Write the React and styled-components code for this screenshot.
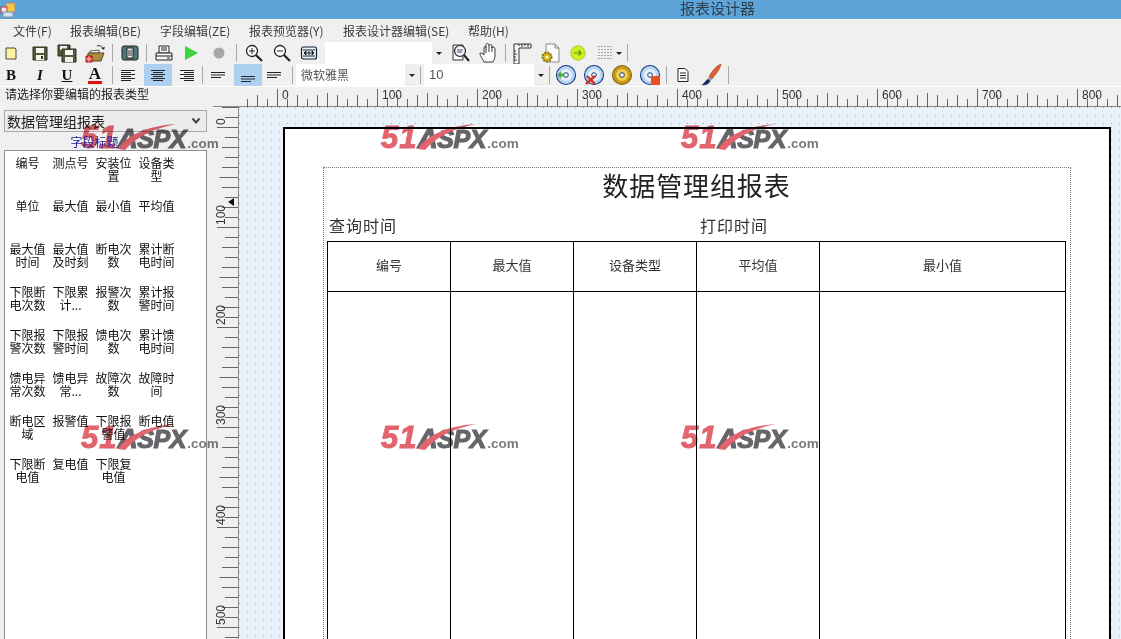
import React from "react";
import styled, { createGlobalStyle } from "styled-components";

const CJK = `"Noto Sans CJK SC", "Liberation Sans", sans-serif`;

const Global = createGlobalStyle`
  html, body { margin: 0; padding: 0; height: 100%; overflow: hidden; background: #f0f0f0; }
  #root { height: 100%; }
`;

const Window = styled.div`
  width: 1121px; height: 639px; display: flex; flex-direction: column; overflow: hidden;
  position: relative; background: #f0f0f0; font-family: ${CJK}; color: #222;
`;
const TitleBar = styled.div`
  height: 19px; flex: none; background: #5fa4d9; display: flex; align-items: center; position: relative;
`;
const AppIcon = styled.div`
  width: 16px; height: 16px; display: flex; flex: none;
`;
const TitleText = styled.div`
  position: absolute; left: 680px; top: 0; font-size: 15px; line-height: 15px; color: #2f3e4c; white-space: nowrap;
`;
const MenuBar = styled.div`
  height: 23px; flex: none; display: flex; align-items: center; padding-left: 13px; font-size: 12px; color: #3a3a3a;
`;
const MenuItem = styled.div`
  width: ${(p) => p.$w}px; flex: none; white-space: nowrap; line-height: 22px;
`;
const Toolbar = styled.div`
  height: 22px; flex: none; display: flex; align-items: center;
`;
const Tool = styled.div`
  width: ${(p) => p.$w || 28}px; height: 22px; flex: none; margin-left: ${(p) => p.$g || 0}px;
  display: flex; align-items: center; justify-content: center;
  background: ${(p) => (p.$on ? "#aed0f0" : "transparent")};
`;
const Sep = styled.div`
  width: 1px; height: 18px; flex: none; background: #a8a8a8; margin-left: ${(p) => p.$g || 0}px;
`;
const Combo = styled.div`
  width: ${(p) => p.$w}px; height: 22px; flex: none; margin-left: ${(p) => p.$g || 0}px; display: flex; background: #fff;
`;
const ComboText = styled.div`
  flex: 1; font-size: ${(p) => p.$size || 12}px; line-height: 22px; padding-left: 5px; color: #555; white-space: nowrap;
  font-family: ${(p) => (p.$latin ? `"Liberation Sans", sans-serif` : CJK)};
`;
const ComboArrow = styled.div`
  width: 14px; flex: none; background: #efefef; display: flex; align-items: center; justify-content: center;
  &::after { content: ""; border: 3px solid transparent; border-top: 3px solid #222; border-bottom: 0; }
`;
const ToolArrow = styled.span`
  margin-left: 3px; border: 3px solid transparent; border-top: 3px solid #222; border-bottom: 0;
`;
const Letter = styled.span`
  font-family: "Liberation Serif", serif; font-weight: 700; font-size: ${(p) => p.$size || 15}px; line-height: ${(p) => (p.$bar ? 14 : 16)}px; color: #111;
  font-style: ${(p) => (p.$i ? "italic" : "normal")};
  text-decoration: ${(p) => (p.$u ? "underline" : "none")};
  border-bottom: ${(p) => (p.$bar ? "3px solid #e01010" : "0")};
  padding: 0 ${(p) => (p.$bar ? 1 : 0)}px;
`;

const Body = styled.div`
  flex: 1; min-height: 0; display: flex; border-top: 1px solid #fff;
`;
const LeftPanel = styled.div`
  width: 213px; flex: none; display: flex; flex-direction: column; padding: 0 6px 0 4px; box-sizing: border-box;
  background: #f0f0f0;
`;
const PanelLabel = styled.div`
  font-size: 12px; line-height: 14px; height: 23px; padding: 0 0 0 1px; color: #222; white-space: nowrap;
`;
const Select = styled.div`
  height: 22px; flex: none; box-sizing: border-box; border: 1px solid #a9a9a9; background: #ececec;
  display: flex; align-items: center; justify-content: space-between; padding: 0 5px 0 2px;
  font-size: 14px; color: #222;
`;
const FieldTitle = styled.div`
  height: 18px; flex: none; text-align: center; padding-right: 22px; font-size: 12px; line-height: 19px; color: #1a1a9a;
  position: relative; z-index: 6;
`;
const FieldList = styled.div`
  flex: 1; min-height: 0; background: #fff; border: 1px solid #8e8e8e; border-bottom: 0; overflow: hidden;
  display: grid; grid-template-columns: repeat(4, 43px); grid-auto-rows: 43px; padding: 6px 0 0 1px;
`;
const Field = styled.div`
  font-size: 12px; line-height: 12.5px; text-align: center; color: #111; padding: 0 3px; word-break: break-all;
`;

const Designer = styled.div`
  flex: 1; min-width: 0; display: grid; grid-template-columns: 26px 1fr; grid-template-rows: 20px 1fr;
  background: #f0f0f0;
`;
const Corner = styled.div`
  border-bottom: 1px solid #8a8a8a;
`;
const HRuler = styled.div`
  overflow: hidden; line-height: 0;
`;
const VRuler = styled.div`
  overflow: hidden; line-height: 0;
`;
const Canvas = styled.div`
  position: relative; overflow: hidden; padding: 20px 0 0 44px; box-sizing: border-box;
  background-color: #e9f2fa;
  background-image: radial-gradient(circle at 0.5px 0.5px, #a2abb4 0.75px, transparent 1px);
  background-size: 8px 8px;
  border-left: 1px solid #8a8a8a; margin-left: -1px;
`;
const Page = styled.div`
  width: 828px; height: 700px; box-sizing: border-box; background: #fff; border: 2px solid #000; padding: 38px 38px 0 38px;
`;
const Frame = styled.div`
  height: 640px; box-sizing: border-box; border: 1px dotted #777; padding: 0 4px 0 3px;
`;
const ReportTitle = styled.div`
  height: 43px; text-align: center; font-size: 26px; line-height: 34px; letter-spacing: 0.9px; color: #222; font-weight: 400;
`;
const ReportMeta = styled.div`
  height: 30px; display: flex; font-size: 16px; line-height: 28px; letter-spacing: 1px; color: #333; padding-left: 2px;
`;
const MetaItem = styled.div`
  width: ${(p) => p.$w}px; flex: none;
`;
const ReportTable = styled.div`
  display: grid; grid-template-columns: 123px 123px 123px 123px 246px; grid-template-rows: 50px 400px;
  border-top: 1px solid #000; border-left: 1px solid #000; width: 739px; box-sizing: border-box;
  font-size: 13px; color: #333;
`;
const HeadCell = styled.div`
  border-right: 1px solid #000; border-bottom: 1px solid #000; display: flex; align-items: center; justify-content: center;
  padding-bottom: 4px; box-sizing: border-box;
`;
const BodyCell = styled.div`
  border-right: 1px solid #000;
`;

const WatermarkLayer = styled.div`
  position: absolute; left: 81px; top: 123px; pointer-events: none; display: grid; mix-blend-mode: multiply;
  grid-template-columns: repeat(3, 300px); grid-template-rows: repeat(2, 300px); z-index: 5;
`;
const Mark = styled.div`
  position: relative; width: 138px; height: 30px; display: flex; align-items: baseline; white-space: nowrap;
  font-family: "Liberation Sans", sans-serif; font-weight: 700; line-height: 30px;
`;
const MarkRed = styled.span`
  font-size: 31px; font-style: italic; color: #e2646e; letter-spacing: 1px; -webkit-text-stroke: 1px #e2646e;
`;
const MarkGray = styled.span`
  font-size: ${(p) => p.$size}px; font-style: italic; color: #66666a; letter-spacing: -0.4px; -webkit-text-stroke: 1.2px #66666a;
`;
const MarkCom = styled.span`
  font-size: 13.5px; color: #7a7a7e; margin-left: 1px;
`;
const Swoosh = styled.svg`
  position: absolute; left: 35px; top: 0; width: 62px; height: 28px;
`;

/* icons */
const S = ({ children, w = 20, h = 20 }) => (
  <svg width={w} height={h} viewBox={`0 0 ${w} ${h}`}>{children}</svg>
);
const IFolder = () => <S><path d="M5 5h9l1 1v10H5z" fill="#fbf3a0" stroke="#4a4a2a" /></S>;
const ISave = () => (
  <S><path d="M3 4h14v13H3z" fill="#56593a" stroke="#2c2e1c" /><path d="M6 5h8v5H6z" fill="#f4f4f0" /><path d="M6 12h8v5H6z" fill="#f2f2e0" /><path d="M11 13h2v3h-2z" fill="#333" /></S>
);
const ISaveAll = () => (
  <S><path d="M1 2h12v11H1z" fill="#56593a" stroke="#2c2e1c" /><path d="M3 3h7v4H3z" fill="#eee" /><path d="M5 6h14v13H5z" fill="#56593a" stroke="#2c2e1c" /><path d="M8 7h8v5H8z" fill="#f4f4f0" /><path d="M8 14h8v5H8z" fill="#eee" /></S>
);
const IOpen = () => (
  <S><path d="M5 8l9-1v3H5z" fill="#fff" stroke="#555" /><path d="M3 18V10h14l2 0-3 8z" fill="#b08c40" stroke="#5a4a20" /><path d="M12 3c3-1 5 0 6 3" fill="none" stroke="#333" /><path d="M16 5l3 2 1-3z" fill="#333" /><path d="M1 13h6v6H1z" fill="#e04040" stroke="#a01010" /><path d="M4 13v6M1 16h6" stroke="#fbb" /></S>
);
const IPage = () => (
  <S><rect x="2" y="3" width="16" height="14" rx="2" fill="#4e7878" stroke="#222" /><rect x="7" y="5" width="6" height="10" fill="#eee" stroke="#222" /><path d="M8 8h4M8 10h4M8 12h4" stroke="#333" /></S>
);
const IPrint = () => (
  <S><path d="M5 3h10v7H5z" fill="#fff" stroke="#222" /><path d="M7 5h6M7 7h6" stroke="#222" /><path d="M2 10h16v7H2z" fill="#f8f8f8" stroke="#222" /><path d="M2 13h16" stroke="#222" /><path d="M13 15h3" stroke="#222" /></S>
);
const IPlay = () => <S><path d="M4 3l13 7-13 7z" fill="#3bd43b" /></S>;
const IStop = () => <S><circle cx="10" cy="10" r="5.5" fill="#a8a8a8" /></S>;
const IZoom = ({ minus }) => (
  <S>
    <circle cx="8" cy="8" r="5.5" fill="#fff" stroke="#222" strokeWidth="1.3" />
    <path d="M12 12l6 6" stroke="#222" strokeWidth="2.2" />
    <path d={minus ? "M5 8h6" : "M5 8h6M8 5v6"} stroke="#222" />
  </S>
);
const IFit = () => (
  <S><rect x="2.5" y="4" width="15" height="12" rx="2" fill="#eef3f8" stroke="#123" strokeWidth="1.2" /><path d="M4 7h12M4 13h12" stroke="#123" /><path d="M8 10h4M5 10l2-2v4zM15 10l-2-2v4z" fill="#123" stroke="#123" /><path d="M10 8v4" stroke="#123" /></S>
);
const ISearch = () => (
  <S w={22} h={22}><path d="M4 3h10v15H4z" fill="#fff" stroke="#333" /><circle cx="11" cy="9" r="5.5" fill="#eef" stroke="#222" strokeWidth="1.2" /><path d="M15 13l5 6" stroke="#222" strokeWidth="2" /><path d="M8 8h6M8 10h5" stroke="#555" /></S>
);
const IHand = () => (
  <S w={22} h={22}><path d="M6 20c-1-3-4-6-4-8s2-1 4 1V6c0-2 2-2 2 0V3c0-2 3-2 3 0v1c0-2 3-2 3 0v2c0-2 3-1 3 1v6c0 3-1 5-2 7z" fill="#fff" stroke="#222" strokeWidth="0.9" /><path d="M8 6v5M11 4v6M14 5v5" stroke="#222" strokeWidth="0.9" /></S>
);
const IRuler = () => (
  <S w={22} h={22}><path d="M3 2h17v4H8v16H3z" fill="#f6f6f6" stroke="#333" /><path d="M8 2v2M11 2v3M14 2v2M17 2v3M3 9h2M3 12h3M3 15h2M3 18h3" stroke="#333" /></S>
);
const IGearDoc = () => (
  <S w={22} h={22}><path d="M7 2h9l4 4v14H7z" fill="#fafafa" stroke="#888" /><path d="M16 2v4h4" fill="none" stroke="#888" /><circle cx="8" cy="15" r="4.5" fill="#d6b416" stroke="#8a7410" strokeDasharray="2 1" strokeWidth="2" /><circle cx="8" cy="15" r="1.5" fill="#fff" /></S>
);
const IGreen = () => (
  <S><circle cx="10" cy="10" r="7.2" fill="#cdf020" stroke="#a8cc20" /><path d="M6 10h7M10.5 7.5L13 10l-2.5 2.5" fill="none" stroke="#5a8a20" strokeWidth="1.2" /></S>
);
const IDots = () => (
  <S w={16} h={16}>
    <path d="M1.5 1.5h13M1.5 4.5h13M1.5 7.5h13M1.5 10.5h13M1.5 13.5h13" stroke="#555" strokeDasharray="1 2" />
  </S>
);
const IAlign = ({ kind }) => (
  <S w={16} h={20}>
    {[5, 7, 9, 11, 13, 15].map((y, i) => {
      const w = i % 2 === 0 ? 14 : 10;
      const x = kind === "c" ? (16 - w) / 2 : kind === "r" ? 15 - w : 1;
      return <path key={y} d={`M${x} ${y + 0.5}h${w}`} stroke="#222" />;
    })}
  </S>
);
const IVAlign = ({ y0 }) => (
  <S w={16} h={20}>
    {[0, 2.5, 5].map((d, i) => (
      <path key={d} d={`M1 ${y0 + d + 0.5}h${i === 2 ? 10 : 14}`} stroke="#222" />
    ))}
  </S>
);
const IDisc = ({ kind }) => {
  const gold = kind === "gold";
  return (
    <S w={22} h={22}>
      <circle cx="11" cy="11" r="9.5" fill={gold ? "#c89a18" : "#bcd6f2"} stroke={gold ? "#8a6410" : "#123a8a"} strokeWidth="1.1" />
      <circle cx="11" cy="11" r="6" fill={gold ? "#ecd050" : "#e6f1fb"} />
      <circle cx="11" cy="11" r="2.3" fill="#fff" stroke="#123a6a" />
      {kind === "add" && <path d="M2 11l4-4v2.5h3v3H6V15z" fill="#48b048" />}
      {kind === "del" && <path d="M3 20l9-8M4 12l8 8" stroke="#d83020" strokeWidth="2.4" />}
      {kind === "stop" && <path d="M12 12h9v9h-9z" fill="#e85020" />}
    </S>
  );
};
const IDoc = () => (
  <S w={16} h={16}><path d="M3 1.5h7l3 3v10H3z" fill="#fff" stroke="#222" /><path d="M5 6h6M5 8.5h6M5 11h6" stroke="#222" /></S>
);
const IBrush = () => (
  <S w={22} h={24}><path d="M21 1c-3 1-9 6-12 13l3 2c3-4 8-9 9-15z" fill="#d8603a" stroke="#a03a20" strokeWidth="0.6" /><path d="M9 14l3 2-1.5 2-3-2z" fill="#999" /><path d="M7.5 16l3 2c-2 4-6 5-9 4 2-1 3-3 6-6z" fill="#1e2c70" /></S>
);
const Chevron = () => (
  <svg width="10" height="8" viewBox="0 0 10 8"><path d="M1.5 1.5L5 5.5l3.5-4" fill="none" stroke="#444" strokeWidth="2" /></svg>
);

const tickInset = (i, major, mid, even, odd) => {
  const m = ((i % 10) + 10) % 10;
  if (m === 0) return major;
  if (m === 5) return mid;
  return m % 2 === 0 ? even : odd;
};
const HorizontalRuler = () => {
  const ticks = [];
  for (let x = 247, i = -3; x < 1121; x += 10, i++) {
    const top = tickInset(i, 2, 6, 8, 12);
    const px = x - 239;
    ticks.push(<path key={x} d={`M${px + 0.5} ${top}V20`} stroke="#666" />);
    if (i % 10 === 0) ticks.push(<text key={`t${x}`} x={px + 5} y={12} fontSize="12" fill="#333" fontFamily="Liberation Sans, sans-serif">{i * 10}</text>);
  }
  return (
    <svg width="882" height="20" viewBox="0 0 882 20"><path d="M0 19.5H882" stroke="#8a8a8a" />{ticks}</svg>
  );
};
const VerticalRuler = () => {
  const ticks = [];
  for (let y = 0, i = -2; y < 532; y += 10, i++) {
    const left = tickInset(i, 4, 6.5, 9, 12);
    ticks.push(<path key={y} d={`M${left} ${y + 0.5}H26`} stroke="#666" />);
    if (i % 10 === 0) ticks.push(<text key={`t${y}`} transform={`translate(12 ${y - 2}) rotate(-90)`} fontSize="12" fill="#333" fontFamily="Liberation Sans, sans-serif">{i * 10}</text>);
  }
  return (
    <svg width="26" height="532" viewBox="0 0 26 532">{ticks}<path d="M21 99l-6-4 6-4z" fill="#111" /></svg>
  );
};

const menus = [["文件(F)", 57], ["报表编辑(BE)", 90], ["字段编辑(ZE)", 89], ["报表预览器(Y)", 94], ["报表设计器编辑(SE)", 125], ["帮助(H)", 60]];
const fields = [
  "编号","测点号","安装位置","设备类型","单位","最大值","最小值","平均值",
  "最大值时间","最大值及时刻","断电次数","累计断电时间","下限断电次数","下限累计...","报警次数","累计报警时间",
  "下限报警次数","下限报警时间","馈电次数","累计馈电时间","馈电异常次数","馈电异常...","故障次数","故障时间",
  "断电区域","报警值","下限报警值","断电值","下限断电值","复电值","下限复电值",
];
const heads = ["编号", "最大值", "设备类型", "平均值", "最小值"];

const Watermark = () => (
  <Mark>
    <MarkRed>51</MarkRed><MarkGray $size={28}>A</MarkGray><MarkGray $size={25}>SPX</MarkGray><MarkCom>.com</MarkCom>
    <Swoosh viewBox="0 0 62 28"><path d="M2 26C10 13 30 3 60 1 40 5 22 12 9 27z" fill="#e2646e" /></Swoosh>
  </Mark>
);

export default function App() {
  return (
    <Window>
      <Global />
      <TitleBar>
        <AppIcon>
          <svg width="16" height="16" viewBox="0 0 16 16"><rect x="6" y="1" width="9" height="9" fill="#f3c64a" stroke="#a88" /><rect x="1" y="5" width="6" height="6" fill="#e8e8e8" stroke="#c33" /><rect x="3" y="10" width="10" height="5" fill="#cfe0f0" stroke="#79a" /></svg>
        </AppIcon>
        <TitleText>报表设计器</TitleText>
      </TitleBar>
      <MenuBar>
        {menus.map(([t, w]) => <MenuItem key={t} $w={w}>{t}</MenuItem>)}
      </MenuBar>
      <Toolbar>
        <Tool $g={-3}><IFolder /></Tool>
        <Tool $g={1}><ISave /></Tool>
        <Tool $g={-1}><ISaveAll /></Tool>
        <Tool><IOpen /></Tool>
        <Sep $g={3} />
        <Tool $g={3}><IPage /></Tool>
        <Sep $g={2} />
        <Tool $g={3}><IPrint /></Tool>
        <Tool $g={-1}><IPlay /></Tool>
        <Tool><IStop /></Tool>
        <Sep $g={3} />
        <Tool $g={3}><IZoom /></Tool>
        <Tool><IZoom minus /></Tool>
        <Tool $g={-1}><IFit /></Tool>
        <Combo $w={121} $g={2}><ComboText /><ComboArrow /></Combo>
        <Tool><ISearch /></Tool>
        <Tool $g={1}><IHand /></Tool>
        <Sep $g={2} />
        <Tool $g={2}><IRuler /></Tool>
        <Tool><IGearDoc /></Tool>
        <Tool><IGreen /></Tool>
        <Tool $w={34}><IDots /><ToolArrow /></Tool>
        <Sep $g={1} />
      </Toolbar>
      <Toolbar>
        <Tool $g={-3}><Letter>B</Letter></Tool>
        <Tool $g={1}><Letter $i>I</Letter></Tool>
        <Tool $g={-1}><Letter $u>U</Letter></Tool>
        <Tool><Letter $bar $size={17}>A</Letter></Tool>
        <Sep $g={3} />
        <Tool $g={1}><IAlign kind="l" /></Tool>
        <Tool $g={2} $on><IAlign kind="c" /></Tool>
        <Tool $g={1}><IAlign kind="r" /></Tool>
        <Sep $g={1} />
        <Tool $g={1}><IVAlign y0={7} /></Tool>
        <Tool $g={2} $on><IVAlign y0={11} /></Tool>
        <Tool $g={-2}><IVAlign y0={7} /></Tool>
        <Sep $g={4} />
        <Combo $w={123} $g={3}><ComboText>微软雅黑</ComboText><ComboArrow /></Combo>
        <Sep $g={1} />
        <Combo $w={124} $g={3}><ComboText $latin $size={13}>10</ComboText><ComboArrow /></Combo>
        <Sep $g={1} />
        <Tool $g={2}><IDisc kind="add" /></Tool>
        <Tool><IDisc kind="del" /></Tool>
        <Tool><IDisc kind="gold" /></Tool>
        <Tool><IDisc kind="stop" /></Tool>
        <Sep $g={2} />
        <Tool $g={2}><IDoc /></Tool>
        <Tool><IBrush /></Tool>
        <Sep $g={3} />
      </Toolbar>
      <Body>
        <LeftPanel>
          <PanelLabel>请选择你要编辑的报表类型</PanelLabel>
          <Select>数据管理组报表<Chevron /></Select>
          <FieldTitle>字段标题</FieldTitle>
          <FieldList>
            {fields.map((f) => <Field key={f}>{f}</Field>)}
          </FieldList>
        </LeftPanel>
        <Designer>
          <Corner />
          <HRuler><HorizontalRuler /></HRuler>
          <VRuler><VerticalRuler /></VRuler>
          <Canvas>
            <Page>
              <Frame>
                <ReportTitle>数据管理组报表</ReportTitle>
                <ReportMeta>
                  <MetaItem $w={371}>查询时间</MetaItem>
                  <MetaItem $w={200}>打印时间</MetaItem>
                </ReportMeta>
                <ReportTable>
                  {heads.map((h) => <HeadCell key={h}>{h}</HeadCell>)}
                  {heads.map((h) => <BodyCell key={h} />)}
                </ReportTable>
              </Frame>
            </Page>
          </Canvas>
        </Designer>
      </Body>
      <WatermarkLayer>
        {[0, 1, 2, 3, 4, 5].map((i) => <Watermark key={i} />)}
      </WatermarkLayer>
    </Window>
  );
}
